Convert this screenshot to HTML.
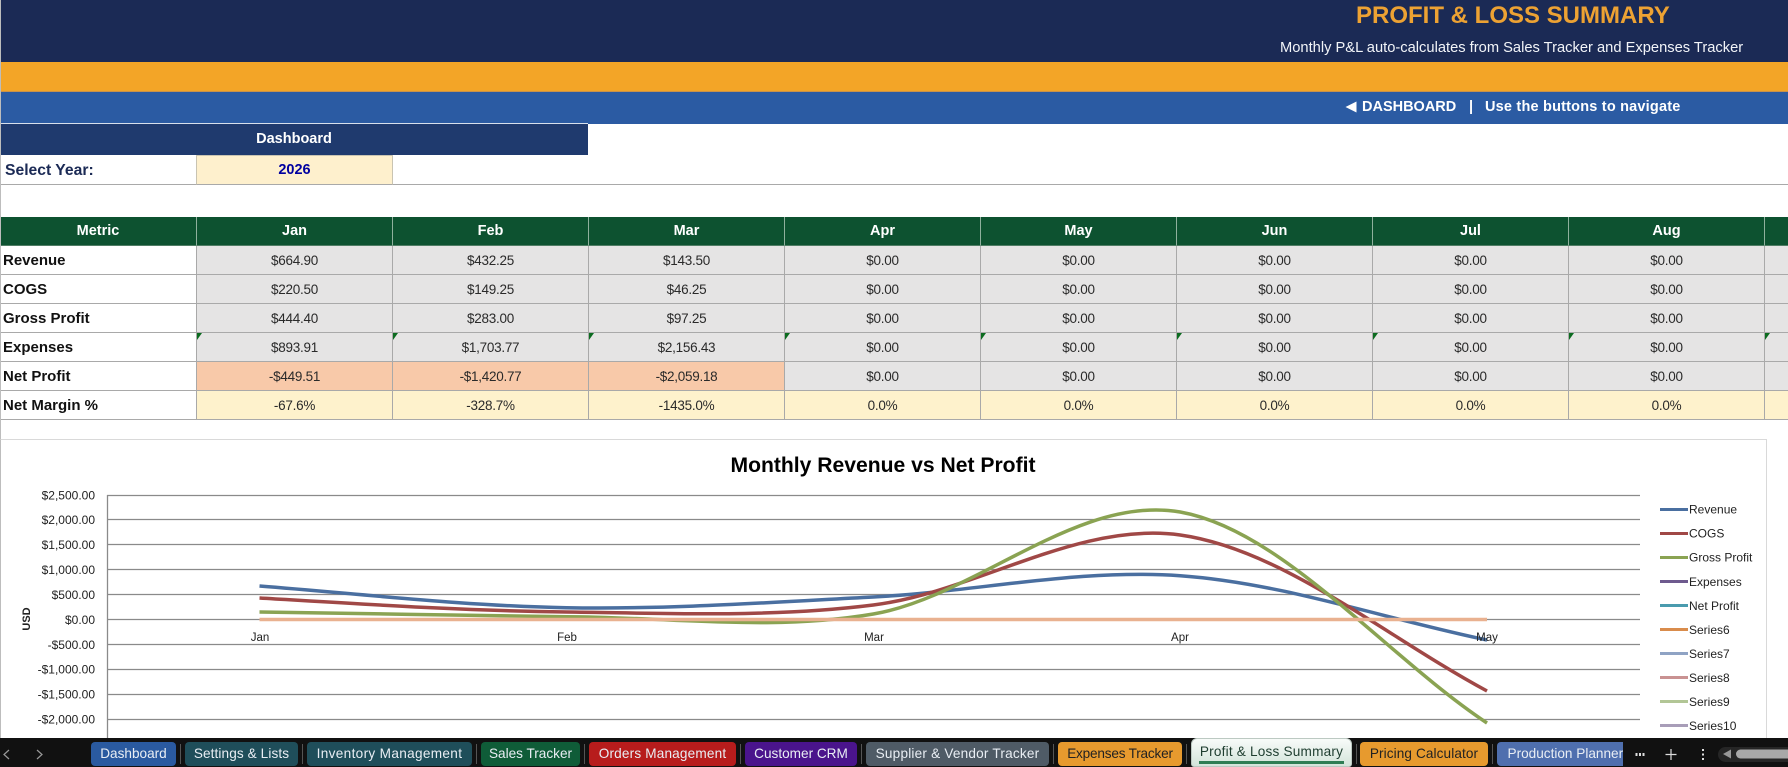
<!DOCTYPE html>
<html lang="en">
<head>
<meta charset="utf-8">
<title>Profit &amp; Loss Summary</title>
<style>
html,body{margin:0;padding:0;background:#fff}
#page{position:relative;width:1788px;height:767px;overflow:hidden;background:#fff;font-family:"Liberation Sans",Arial,sans-serif;color:#111}
.abs{position:absolute}
.band{position:absolute;left:0;width:1788px}
.txt{position:absolute;white-space:nowrap}
table{position:absolute;left:0;top:217px;border-collapse:separate;border-spacing:0;table-layout:fixed;width:1961px}
col.a{width:197px}
col.b{width:196px}
td,th{padding:0;box-sizing:border-box;text-align:center;font-size:13.5px;letter-spacing:-.27px;height:29px;border-right:1px solid #a9a9a9;border-bottom:1px solid #a9a9a9;background:#e5e4e4;color:#2a2a2a;position:relative;overflow:hidden}
th{height:29px;background:#0d5230;color:#fff;font-size:14.5px;letter-spacing:0;font-weight:bold;border-right:1px solid #8fb09d;border-bottom:1px solid #4f7d64;border-top:0}
td.l{background:#fff;text-align:left;padding-left:3px;font-weight:bold;font-size:15px;letter-spacing:0;color:#111}
td.n{background:#f8c9a9}
td.m{background:#fef2cc}
td.t::before{content:"";position:absolute;left:0;top:0;border-top:7px solid #0b6b1f;border-right:5px solid transparent}
.tab{position:absolute;top:742px;height:24px;line-height:24px;border-radius:4px;text-align:center;font-size:13.6px;color:#e9eef4;white-space:nowrap;overflow:hidden}
.sep{position:absolute;top:744px;width:1px;height:20px;background:#555}
</style>
</head>
<body>
<div id="page">
  <div class="band" style="top:0;height:62px;background:#1b2a55"></div>
  <div class="band" style="top:62px;height:29px;background:#f3a527"></div>
  <div class="band" style="top:91px;height:33px;background:#2b5ba3;border-top:1px solid #c9924a;box-sizing:border-box"></div>

  <div class="txt" style="left:1356px;top:2px;font-size:24px;line-height:28px;font-weight:bold;color:#eda233">PROFIT &amp; LOSS SUMMARY</div>
  <div class="txt" style="left:1280px;top:39px;font-size:14.7px;line-height:18px;color:#f2f4f8">Monthly P&amp;L auto-calculates from Sales Tracker and Expenses Tracker</div>

  <svg class="abs" style="left:1345px;top:100px" width="13" height="14" viewBox="0 0 13 14"><path d="M0.5 7L11.5 1.5V12.5Z" fill="#fff"/></svg>
  <div class="txt" style="left:1362px;top:98px;font-size:14.5px;line-height:18px;font-weight:bold;color:#fff">DASHBOARD</div>
  <div class="txt" style="left:1469px;top:98px;font-size:14.5px;line-height:18px;font-weight:bold;color:#fff">|</div>
  <div class="txt" style="left:1485px;top:98px;font-size:14.5px;letter-spacing:.2px;line-height:18px;font-weight:bold;color:#fff">Use the buttons to navigate</div>

  <div class="abs" style="left:0;top:123px;width:588px;height:32px;background:#1f3a6e;border-top:1px solid #d8e0ec;box-sizing:border-box;color:#fff;font-weight:bold;font-size:14.5px;line-height:31px;text-align:center">Dashboard</div>
  <div class="abs" style="left:0;top:155px;width:1788px;height:30px;border-bottom:1px solid #a9a9a9;box-sizing:border-box"></div>
  <div class="txt" style="left:5px;top:162px;font-size:15.7px;line-height:18px;font-weight:bold;color:#1b2a55">Select Year:</div>
  <div class="abs" style="left:196px;top:155px;width:197px;height:30px;box-sizing:border-box;background:#fef0cd;border:1px solid #c9c4b2;border-bottom:1px solid #a9a9a9;text-align:center;color:#0000a0;font-weight:bold;font-size:14.5px;line-height:29px">2026</div>

  <table>
    <colgroup><col class="a"><col class="b"><col class="b"><col class="b"><col class="b"><col class="b"><col class="b"><col class="b"><col class="b"><col class="b"></colgroup>
    <tr><th>Metric</th><th>Jan</th><th>Feb</th><th>Mar</th><th>Apr</th><th>May</th><th>Jun</th><th>Jul</th><th>Aug</th><th></th></tr>
    <tr><td class="l">Revenue</td><td>$664.90</td><td>$432.25</td><td>$143.50</td><td>$0.00</td><td>$0.00</td><td>$0.00</td><td>$0.00</td><td>$0.00</td><td></td></tr>
    <tr><td class="l">COGS</td><td>$220.50</td><td>$149.25</td><td>$46.25</td><td>$0.00</td><td>$0.00</td><td>$0.00</td><td>$0.00</td><td>$0.00</td><td></td></tr>
    <tr><td class="l">Gross Profit</td><td>$444.40</td><td>$283.00</td><td>$97.25</td><td>$0.00</td><td>$0.00</td><td>$0.00</td><td>$0.00</td><td>$0.00</td><td></td></tr>
    <tr><td class="l">Expenses</td><td class="t">$893.91</td><td class="t">$1,703.77</td><td class="t">$2,156.43</td><td class="t">$0.00</td><td class="t">$0.00</td><td class="t">$0.00</td><td class="t">$0.00</td><td class="t">$0.00</td><td class="t"></td></tr>
    <tr><td class="l">Net Profit</td><td class="n">-$449.51</td><td class="n">-$1,420.77</td><td class="n">-$2,059.18</td><td>$0.00</td><td>$0.00</td><td>$0.00</td><td>$0.00</td><td>$0.00</td><td></td></tr>
    <tr><td class="l">Net Margin %</td><td class="m">-67.6%</td><td class="m">-328.7%</td><td class="m">-1435.0%</td><td class="m">0.0%</td><td class="m">0.0%</td><td class="m">0.0%</td><td class="m">0.0%</td><td class="m">0.0%</td><td class="m"></td></tr>
  </table>
  <div class="abs" style="left:0;top:0;width:1px;height:738px;background:#bdbdbd"></div>

  <svg class="abs" style="left:0;top:0" width="1788" height="767" viewBox="0 0 1788 767" font-family="'Liberation Sans',Arial,sans-serif">
    <path d="M0.5 439.5H1766.5V738" fill="none" stroke="#d9d9d9" stroke-width="1"/>
    <text x="883" y="472" text-anchor="middle" font-size="21" font-weight="bold" fill="#000" textLength="305" lengthAdjust="spacingAndGlyphs">Monthly Revenue vs Net Profit</text>

    <g stroke="#8a8a8a" stroke-width="1.3" fill="none">
      <path d="M107 495.5H1640M107 519.5H1640M107 544.5H1640M107 569.5H1640M107 594.5H1640M107 619.5H1640M107 644.5H1640M107 669.5H1640M107 694.5H1640M107 719.5H1640"/>
      <path d="M107.5 495V738"/>
    </g>

    <g font-size="12" fill="#222" text-anchor="end">
      <text x="95" y="499.5">$2,500.00</text>
      <text x="95" y="524">$2,000.00</text>
      <text x="95" y="549">$1,500.00</text>
      <text x="95" y="574">$1,000.00</text>
      <text x="95" y="599">$500.00</text>
      <text x="95" y="624">$0.00</text>
      <text x="95" y="649">-$500.00</text>
      <text x="95" y="673.5">-$1,000.00</text>
      <text x="95" y="698.5">-$1,500.00</text>
      <text x="95" y="723.5">-$2,000.00</text>
    </g>
    <text transform="translate(30 619) rotate(-90)" text-anchor="middle" font-size="11" font-weight="bold" fill="#222">USD</text>

    <g fill="none" stroke-width="3.5" stroke-linecap="butt">
      <path stroke="#4a6fa0" d="M259.5 586C361.8 594 464.1 605.9 566.4 607.7C668.7 609.5 771 602.3 873.3 597C975.6 591.7 1077.9 568.5 1180.2 575.7C1282.5 582.9 1384.7 619 1487 640"/>
      <path stroke="#a04846" d="M259.5 598C361.8 604 464.1 610.8 566.4 612C668.7 613.2 771 617.8 873.3 605C975.6 592.2 1077.9 520.7 1180.2 535C1282.5 549.3 1384.7 636 1487 691"/>
      <path stroke="#8aa352" d="M259.5 612C361.8 613 464.1 615.8 566.4 616.7C668.7 617 771 631.5 873.3 614C975.6 596.5 1077.9 494 1180.2 512C1282.5 530.2 1384.7 655 1487 723"/>
      <path stroke="#e9b190" d="M259.5 619.5H1487"/>
    </g>

    <g font-size="11.5" fill="#222" text-anchor="middle">
      <text x="260" y="641">Jan</text>
      <text x="567" y="641">Feb</text>
      <text x="874" y="641">Mar</text>
      <text x="1180" y="641">Apr</text>
      <text x="1487" y="641">May</text>
    </g>

    <g stroke-width="3" fill="none">
      <path stroke="#4a6fa0" d="M1660 509.5H1688"/>
      <path stroke="#a04846" d="M1660 533.5H1688"/>
      <path stroke="#8aa352" d="M1660 557.5H1688"/>
      <path stroke="#6e5a8e" d="M1660 581.5H1688"/>
      <path stroke="#4a9bae" d="M1660 605.5H1688"/>
      <path stroke="#d98c4c" d="M1660 629.5H1688"/>
      <path stroke="#8fa3c4" d="M1660 653.5H1688"/>
      <path stroke="#c99292" d="M1660 677.5H1688"/>
      <path stroke="#b2c696" d="M1660 701.5H1688"/>
      <path stroke="#a89db8" d="M1660 725.5H1688"/>
    </g>
    <g font-size="12" fill="#222">
      <text x="1689" y="513.5">Revenue</text>
      <text x="1689" y="537.5">COGS</text>
      <text x="1689" y="561.5">Gross Profit</text>
      <text x="1689" y="586">Expenses</text>
      <text x="1689" y="610">Net Profit</text>
      <text x="1689" y="634">Series6</text>
      <text x="1689" y="658">Series7</text>
      <text x="1689" y="682">Series8</text>
      <text x="1689" y="706">Series9</text>
      <text x="1689" y="730">Series10</text>
    </g>
  </svg>

  <div class="abs" style="left:0;top:738px;width:1788px;height:29px;background:#111"></div>
  <svg class="abs" style="left:0;top:738px" width="90" height="29" viewBox="0 0 90 29"><path d="M9 12L4 16.5L9 21M37 12L42 16.5L37 21" fill="none" stroke="#999" stroke-width="1.2"/></svg>

  <div class="tab" style="left:91px;width:85px;background:#2a5aa0">Dashboard</div>
  <div class="sep" style="left:180px"></div>
  <div class="tab" style="left:185px;width:113px;background:#1f4e5a;letter-spacing:.1px">Settings &amp; Lists</div>
  <div class="sep" style="left:302px"></div>
  <div class="tab" style="left:307px;width:165px;background:#1f4e5a;letter-spacing:.33px">Inventory Management</div>
  <div class="sep" style="left:476px"></div>
  <div class="tab" style="left:481px;width:99px;background:#0f5c38">Sales Tracker</div>
  <div class="sep" style="left:584px"></div>
  <div class="tab" style="left:589px;width:147px;background:#b71c1c;letter-spacing:.17px">Orders Management</div>
  <div class="sep" style="left:740px"></div>
  <div class="tab" style="left:745px;width:112px;background:#4a148c">Customer CRM</div>
  <div class="sep" style="left:861px"></div>
  <div class="tab" style="left:866px;width:183px;background:#4f5b66;letter-spacing:.2px">Supplier &amp; Vendor Tracker</div>
  <div class="sep" style="left:1053px"></div>
  <div class="tab" style="left:1058px;width:124px;background:#e79a2e;color:#222;letter-spacing:-.2px">Expenses Tracker</div>
  <div class="sep" style="left:1186px"></div>
  <div class="abs" style="left:1191px;top:738px;width:161px;height:29px;background:linear-gradient(#f8fbf9,#d3e4da);border-radius:6px 6px 3px 3px;box-sizing:border-box;border:1px solid #bcc9c2;text-align:center;font-size:13.6px;letter-spacing:.2px;line-height:26px;color:#1e3d2f;white-space:nowrap">Profit &amp; Loss Summary<div class="abs" style="left:7px;right:7px;top:22px;height:3px;background:#2f7d54"></div></div>
  <div class="sep" style="left:1356px"></div>
  <div class="tab" style="left:1360px;width:128px;background:#e79a2e;color:#222;letter-spacing:.1px">Pricing Calculator</div>
  <div class="sep" style="left:1492px"></div>
  <div class="tab" style="left:1497px;width:126px;background:#4f6fae;text-align:left;border-radius:4px 0 0 4px;text-indent:10.5px">Production Planner</div>

  <svg class="abs" style="left:1625px;top:738px" width="163" height="29" viewBox="0 0 163 29">
    <g fill="#ddd"><rect x="10.5" y="15" width="2" height="3"/><rect x="14" y="15" width="2" height="3"/><rect x="17.5" y="15" width="2" height="3"/><rect x="77" y="11" width="2" height="2"/><rect x="77" y="15.5" width="2" height="2"/><rect x="77" y="20" width="2" height="2"/></g>
    <path d="M46 11V22M40.5 16.5H51.5" stroke="#ddd" stroke-width="1.2" fill="none"/>
    <rect x="93" y="9" width="80" height="15" rx="7.5" fill="#262626"/>
    <path d="M98 16L106 11.5V20.5Z" fill="#999"/>
    <rect x="111" y="11.5" width="60" height="9" rx="4.5" fill="#a8a8a8"/>
  </svg>
</div>
</body>
</html>
